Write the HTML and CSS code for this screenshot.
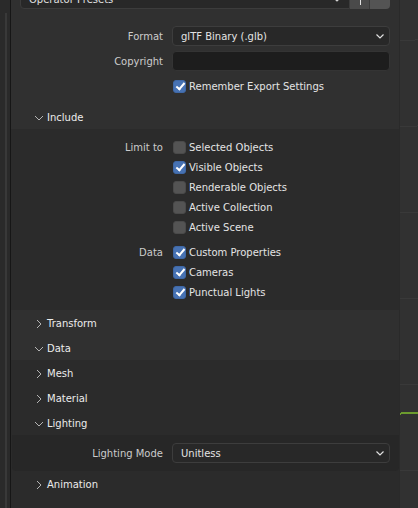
FILE: index.html
```html
<!DOCTYPE html>
<html>
<head>
<meta charset="utf-8">
<link rel="stylesheet" href="styles.css">
</head>
<body>
<div class="app">
  <div class="strip"><div class="scroll"></div></div>
  <div class="panel">
    <div class="presets">
      <div class="preset-select"><span>Operator Presets</span>
        <svg class="chev" width="8" height="5" viewBox="0 0 8 5"><path d="M0.5 0.5 L4 4 L7.5 0.5" fill="none" stroke="#d0d0d0" stroke-width="1.2"/></svg>
      </div>
      <div class="pbtn plus"><svg width="20" height="20" viewBox="0 0 20 20"><path d="M10.5 4 V16 M4.5 10 H16.5" stroke="#e0e0e0" stroke-width="1"/></svg></div>
      <div class="pbtn minus"></div>
    </div>

    <div class="props">
      <div class="row"><label>Format</label>
        <div class="select"><span>glTF Binary (.glb)</span>
          <svg class="chev" width="8" height="5" viewBox="0 0 8 5"><path d="M0.5 0.5 L4 4 L7.5 0.5" fill="none" stroke="#e0e0e0" stroke-width="1.2"/></svg>
        </div>
      </div>
      <div class="row"><label>Copyright</label><div class="field"></div></div>
      <div class="row"><label></label><div class="check on"><i></i><span>Remember Export Settings</span></div></div>
    </div>

    <div class="head top"><svg class="ico" width="10" height="10" viewBox="0 0 10 10"><path d="M1 3 L5 7 L9 3" fill="none" stroke="#b4b4b4" stroke-width="1"/></svg><span>Include</span></div>
    <div class="content">
      <div class="group">
        <div class="row"><label>Limit to</label><div class="check"><i></i><span>Selected Objects</span></div></div>
        <div class="row"><label></label><div class="check on"><i></i><span>Visible Objects</span></div></div>
        <div class="row"><label></label><div class="check"><i></i><span>Renderable Objects</span></div></div>
        <div class="row"><label></label><div class="check"><i></i><span>Active Collection</span></div></div>
        <div class="row"><label></label><div class="check"><i></i><span>Active Scene</span></div></div>
      </div>
      <div class="group">
        <div class="row"><label>Data</label><div class="check on"><i></i><span>Custom Properties</span></div></div>
        <div class="row"><label></label><div class="check on"><i></i><span>Cameras</span></div></div>
        <div class="row"><label></label><div class="check on"><i></i><span>Punctual Lights</span></div></div>
      </div>
    </div>

    <div class="head top"><svg class="ico" width="10" height="10" viewBox="0 0 10 10"><path d="M3 1 L7 5 L3 9" fill="none" stroke="#b4b4b4" stroke-width="1"/></svg><span>Transform</span></div>
    <div class="head top"><svg class="ico" width="10" height="10" viewBox="0 0 10 10"><path d="M1 3 L5 7 L9 3" fill="none" stroke="#b4b4b4" stroke-width="1"/></svg><span>Data</span></div>
    <div class="inner">
      <div class="head"><svg class="ico" width="10" height="10" viewBox="0 0 10 10"><path d="M3 1 L7 5 L3 9" fill="none" stroke="#b4b4b4" stroke-width="1"/></svg><span>Mesh</span></div>
      <div class="head"><svg class="ico" width="10" height="10" viewBox="0 0 10 10"><path d="M3 1 L7 5 L3 9" fill="none" stroke="#b4b4b4" stroke-width="1"/></svg><span>Material</span></div>
      <div class="head"><svg class="ico" width="10" height="10" viewBox="0 0 10 10"><path d="M1 3 L5 7 L9 3" fill="none" stroke="#b4b4b4" stroke-width="1"/></svg><span>Lighting</span></div>
      <div class="deep">
        <div class="row"><label>Lighting Mode</label>
          <div class="select"><span>Unitless</span>
            <svg class="chev" width="8" height="5" viewBox="0 0 8 5"><path d="M0.5 0.5 L4 4 L7.5 0.5" fill="none" stroke="#e0e0e0" stroke-width="1.2"/></svg>
          </div>
        </div>
      </div>
      <div class="head"><svg class="ico" width="10" height="10" viewBox="0 0 10 10"><path d="M3 1 L7 5 L3 9" fill="none" stroke="#b4b4b4" stroke-width="1"/></svg><span>Animation</span></div>
    </div>
  </div>
  <div class="viewport"></div>
</div>
</body>
</html>
```

FILE: styles.css
```css
* { box-sizing: border-box; }
html, body { margin: 0; padding: 0; }
body {
  background: #303030;
  font-family: "DejaVu Sans", sans-serif;
  font-size: 10px;
  color: #e2e2e2;
}
.app {
  display: flex;
  width: 418px;
  height: 508px;
  overflow: hidden;
}
.strip {
  width: 11px;
  flex: none;
  background: #2a2a2a;
  border-right: 1px solid #161616;
  padding: 13px 0 0 5px;
}
.scroll {
  width: 2px;
  height: 100%;
  background: #393939;
}
.panel {
  width: 388px;
  flex: none;
  background: #303030;
  display: flex;
  flex-direction: column;
}
.viewport {
  flex: 1;
  background:
    linear-gradient(177deg, transparent 0 412px, #6c9b2e 412px 414px, transparent 414px),
    repeating-linear-gradient(178deg, #313131 0 40px, #393939 40px 41px, #313131 41px 86px),
    #313131;
  border-left: 1px solid #2a2a2a;
}

/* presets */
.presets {
  display: flex;
  margin: -11px 0 0 9px;
  width: 370px;
  height: 20px;
}
.preset-select {
  flex: 1;
  background: #282828;
  border: 1px solid #3c3c3c;
  border-radius: 0 0 0 4px;
  display: flex;
  align-items: center;
  padding: 0 6px 0 8px;
  color: #e0e0e0;
}
.preset-select span { flex: 1; }
.pbtn { width: 20px; height: 20px; }
.plus { background: #4a4a4a; border-right: 1px solid #3a3a3a; }
.minus { background: #545454; border-radius: 0 0 4px 0; }

/* property rows */
.props {
  padding: 17px 0 8px;
  display: flex;
  flex-direction: column;
  gap: 5px;
}
.row {
  display: grid;
  grid-template-columns: 152px 218px;
  column-gap: 9px;
  height: 20px;
  align-items: center;
}
.row label {
  text-align: right;
  color: #cccccc;
}
.select {
  height: 20px;
  background: #282828;
  border: 1px solid #3d3d3d;
  border-radius: 4px;
  display: flex;
  align-items: center;
  padding: 0 3px 0 8px;
  color: #e4e4e4;
}
.select span { flex: 1; }
.chev { margin-right: 2px; }
.field {
  height: 20px;
  background: #1d1d1d;
  border: 1px solid #343434;
  border-radius: 4px;
}
.check {
  display: flex;
  align-items: center;
  gap: 3px;
  padding-left: 1px;
  color: #e4e4e4;
}
.check i {
  width: 13px;
  height: 13px;
  border-radius: 3px;
  background: #545454;
  border: 1px solid #4a4a4a;
  position: relative;
}
.check.on i {
  background: #4772b3;
  border-color: #3f68a6;
}
.check.on i::after {
  content: "";
  position: absolute;
  left: 3.5px;
  top: 0.5px;
  width: 3px;
  height: 7px;
  border: solid #ffffff;
  border-width: 0 2px 2px 0;
  transform: rotate(40deg);
}

/* headers */
.head {
  height: 25px;
  display: flex;
  align-items: center;
  padding: 2px 0 0 23px;
  gap: 3px;
  color: #ececec;
}
.head.top { background: #303030; }
.content {
  background: #2b2b2b;
  padding: 8px 0;
  display: flex;
  flex-direction: column;
  gap: 5px;
}
.inner {
  background: #2b2b2b;
  flex: 1;
}
.deep {
  background: #272727;
  margin-left: 1px;
  padding: 8px 0 8px;
  border-radius: 0 0 4px 4px;
}
.deep .row {
  grid-template-columns: 151px 218px;
}
```
